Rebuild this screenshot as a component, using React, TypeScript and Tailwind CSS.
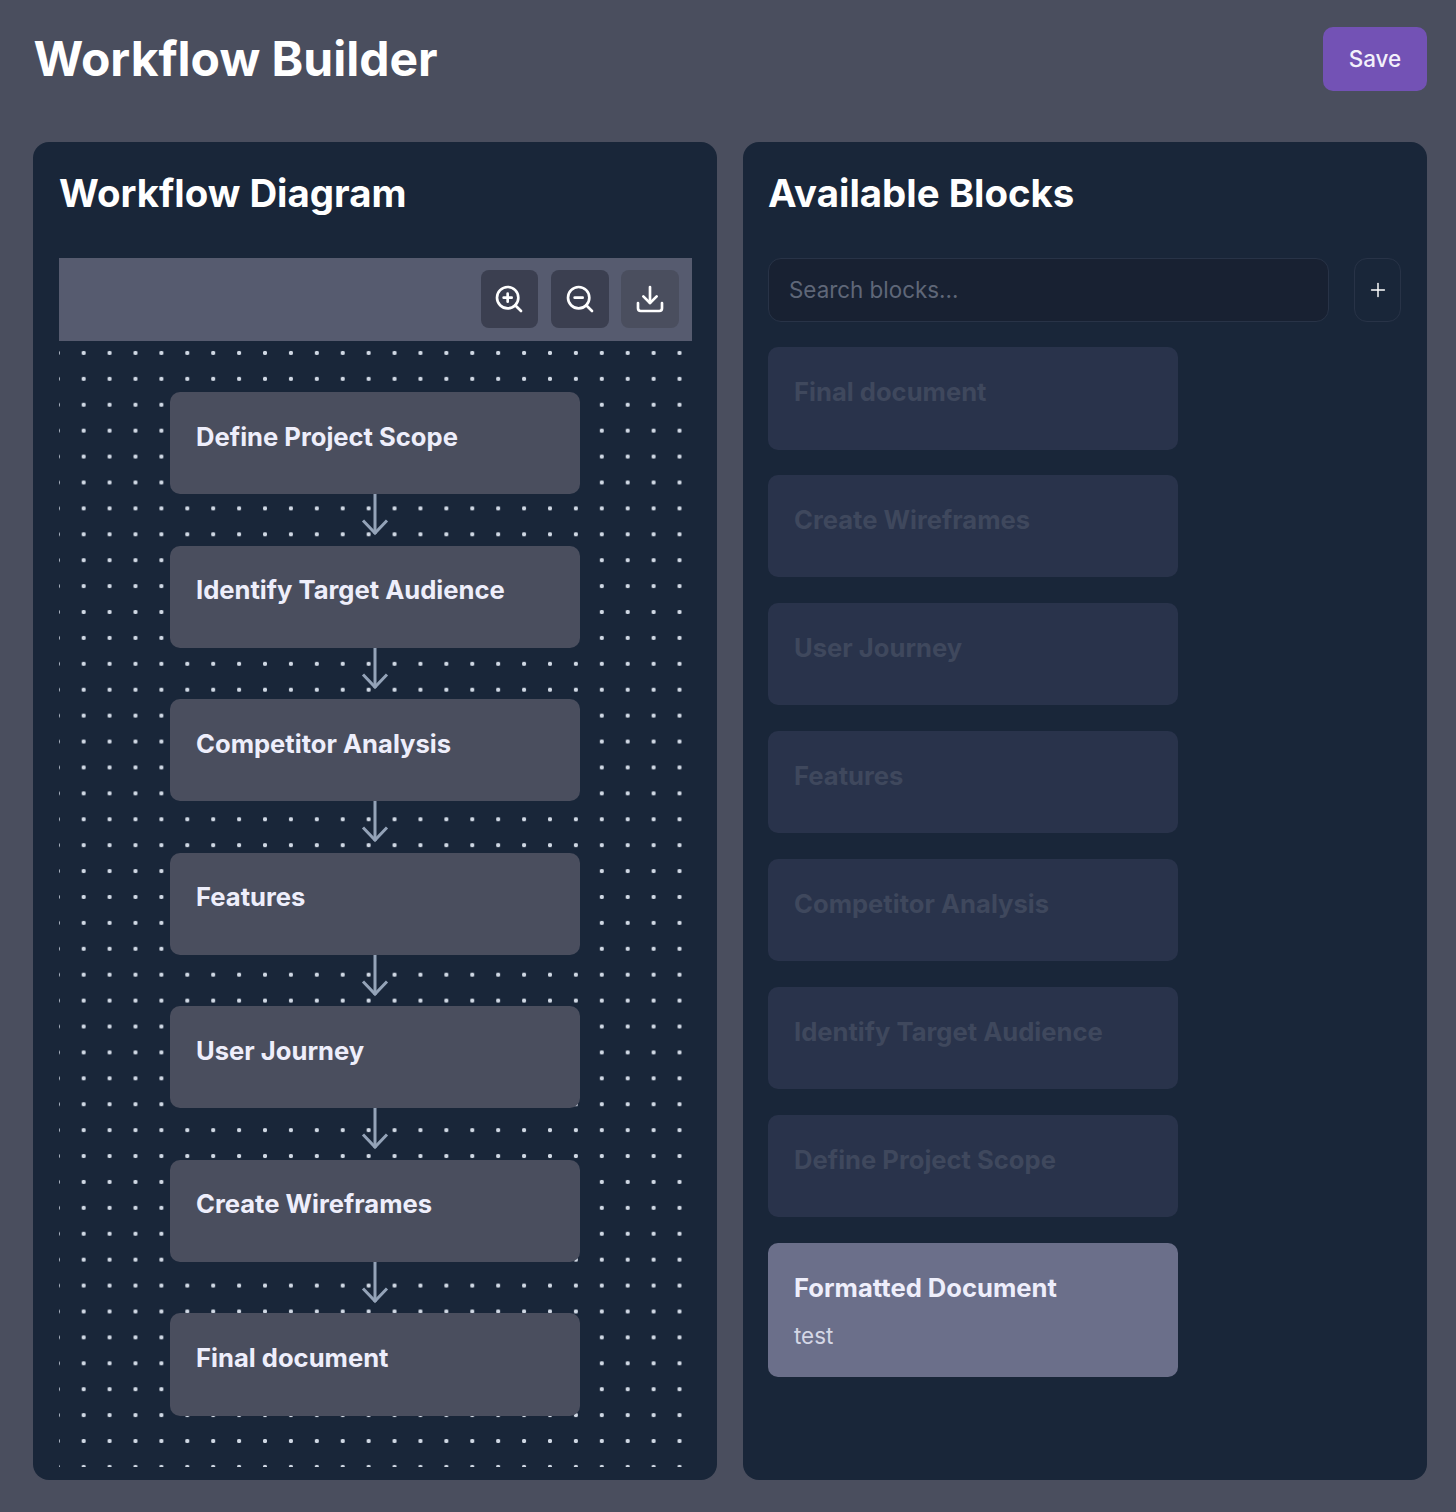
import { Download, Plus, ZoomIn, ZoomOut } from "lucide-react";

const flow = ["Define Project Scope", "Identify Target Audience", "Competitor Analysis", "Features", "User Journey", "Create Wireframes", "Final document"];
const blocks = ["Final document", "Create Wireframes", "User Journey", "Features", "Competitor Analysis", "Identify Target Audience", "Define Project Scope"];

function Arrow() {
  return (
    <svg width="30" height="51.2" viewBox="0 0 30 51.2" className="block" fill="none" stroke="#94a3b8" strokeWidth="3">
      <path d="M15 0V40" />
      <path d="M3 26.5L15 39L27 26.5" />
    </svg>
  );
}

export default function App() {
  return (
    <div className="h-[1512px] w-[1456px] overflow-hidden bg-[#4a4e5e] font-['Inter',sans-serif]">
      <header className="flex h-[142px] items-start justify-between pl-[33.5px] pr-[29px] pt-[27px]">
        <h1 className="text-[48px] font-bold leading-[64px] text-white">Workflow Builder</h1>
        <button className="h-[64px] w-[104px] rounded-[10px] bg-[#7352b5] text-[22.4px] font-medium text-[#f3f0fb]">Save</button>
      </header>
      <main className="flex gap-[26px] pl-[33px] pr-[29px]">
        <section className="h-[1338px] w-[684px] rounded-[16px] bg-[#192639] pl-[26px] pr-[25px] pt-[26px]">
          <h2 className="h-[90px] text-[38.4px] font-bold leading-[50px] text-white">Workflow Diagram</h2>
          <div className="flex h-[83px] items-start justify-end bg-[#565b6f] pr-[13px] pt-[12px]">
            <button className="mr-[13px] flex h-[58px] w-[57px] items-center justify-center rounded-[8px] bg-[#3b3f50] pr-[1px] text-white"><ZoomIn size={32} /></button>
            <button className="mr-[12px] flex h-[58px] w-[58px] items-center justify-center rounded-[8px] bg-[#3b3f50] text-white"><ZoomOut size={32} /></button>
            <button className="flex h-[58px] w-[58px] items-center justify-center rounded-[8px] bg-[#4a4e5e] text-white"><Download size={32} /></button>
          </div>
          <div className="flex h-[1126px] flex-col items-center bg-[radial-gradient(circle,#d0d8e4_1.9px,transparent_2.4px)] bg-[size:25.92px_25.92px] bg-[position:-14.2px_-1px] pr-[1px] pt-[51px]">
            {flow.map((t, i) => (
              <div key={t} className="flex flex-col items-center">
                <div className="h-[102.35px] w-[410px] rounded-[10px] bg-[#4a4e5e] pl-[26px] pt-[25.6px] text-[25.6px] font-bold leading-[38px] text-[#eeeefb]">{t}</div>
                {i < flow.length - 1 && <Arrow />}
              </div>
            ))}
          </div>
        </section>
        <section className="h-[1338px] w-[684px] rounded-[16px] bg-[#192639] pl-[25px] pr-[26px] pt-[26px]">
          <h2 className="h-[90px] text-[38.4px] font-bold leading-[50px] text-white">Available Blocks</h2>
          <div className="flex gap-[25px]">
            <input readOnly placeholder="Search blocks..." className="h-[64px] w-[562px] rounded-[13px] border border-[#283347] bg-[#182132] px-[20px] pb-[2px] text-[22.4px] text-white placeholder:text-[#5f6778]" />
            <button className="flex h-[64px] w-[47px] items-center justify-center rounded-[13px] border border-[#283347] text-white"><Plus size={22} strokeWidth={1.6} /></button>
          </div>
          <div className="mt-[25.4px] flex w-[410px] flex-col gap-[25.7px]">
            {blocks.map((t) => (
              <div key={t} className="h-[102.2px] rounded-[10px] bg-[#29334b] pl-[26px] pt-[26px] text-[25.6px] font-bold leading-[38px] text-[#3f485d]">{t}</div>
            ))}
            <div className="h-[134px] rounded-[10px] bg-[#6b6f8a] pl-[26px] pt-[26px]">
              <div className="text-[25.6px] font-bold leading-[38px] text-[#eeeefb]">Formatted Document</div>
              <div className="mt-[12px] text-[22.4px] leading-[34px] text-[#d5d7e6]">test</div>
            </div>
          </div>
        </section>
      </main>
    </div>
  );
}
